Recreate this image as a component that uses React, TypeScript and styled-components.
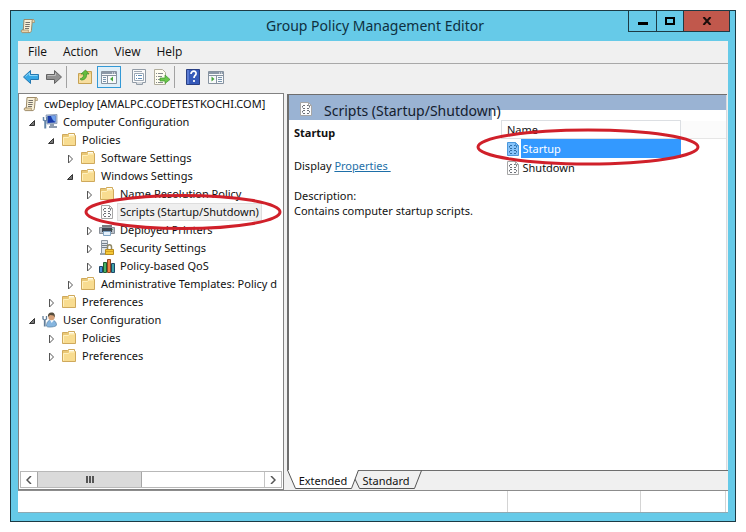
import React from "react";
import styled, { createGlobalStyle, css } from "styled-components";

const GlobalStyle = createGlobalStyle`
  * { box-sizing: border-box; }
  body {
    margin: 0;
    background: #ffffff;
    color: #111111;
    font-family: "Noto Sans", "Open Sans", sans-serif;
    font-size: 12px;
  }
  button {
    margin: 0;
    padding: 0;
    border: 0;
    background: none;
    color: inherit;
    font: inherit;
  }
  svg { display: block; flex: none; }
`;

const Page = styled.div`
  display: flex;
  min-height: 100vh;
  padding: 10px;
`;

const Window = styled.div`
  display: flex;
  flex: 1;
  flex-direction: column;
  min-width: 0;
  border: 1px solid #1c3a44;
  background: #66cae8;
`;

const TitleBar = styled.header`
  display: grid;
  grid-template-columns: 1fr auto 1fr;
  height: 30px;
  padding: 0 5px 0 9px;
`;

const TitleIcon = styled.div`
  padding-top: 7px;
`;

const Title = styled.h1`
  margin: 0;
  color: #0e3040;
  font-size: 14px;
  font-weight: 400;
  line-height: 30px;
`;

const Controls = styled.div`
  display: flex;
  justify-self: end;
  height: 21px;
  border: solid #1c3a44;
  border-width: 0 1px 1px;
`;

const ControlButton = styled.button<{ $wide?: boolean }>`
  display: flex;
  align-items: center;
  justify-content: center;
  width: ${(p) => (p.$wide ? 46 : 27)}px;
  background: ${(p) => (p.$wide ? "#c1584c" : "transparent")};
  & + & { border-left: 1px solid #1c3a44; }
`;

const Client = styled.div`
  display: flex;
  flex: 1;
  flex-direction: column;
  min-width: 0;
  margin: 0 7px 8px;
  border-bottom: 1px solid #8fa9b2;
  background: #f0f0f0;
`;

const MenuBar = styled.nav`
  display: flex;
  gap: 16px;
  height: 23px;
  padding: 0 10px;
  border-bottom: 1px solid #a8a8a8;
`;

const MenuButton = styled.button`
  font-family: "Open Sans", "Noto Sans", sans-serif;
  line-height: 22px;
`;

const Toolbar = styled.div`
  display: flex;
  align-items: center;
  height: 29px;
  padding: 0 5px 4px;
`;

const ToolGroup = styled.div<{ $divided?: boolean; $lead?: boolean }>`
  display: flex;
  align-items: center;
  height: 22px;
  gap: 7px;
  padding: 0 ${(p) => (p.$divided ? 4 : 0)}px 0 ${(p) => (p.$lead ? 10 : 0)}px;
  border-right: ${(p) => (p.$divided ? "1px solid #a2a2a2" : "0")};
`;

const ToolButton = styled.button<{ $active?: boolean }>`
  display: flex;
  align-items: center;
  justify-content: center;
  width: 16px;
  height: 22px;
  ${(p) =>
    p.$active &&
    css`
      width: 24px;
      margin: 0 3px 0 -3px;
      border: 1px solid #3399d6;
      background: #e0eff8;
    `}
`;

const Workspace = styled.div`
  display: grid;
  flex: 1;
  grid-template-columns: 266px minmax(0, 1fr);
  gap: 3px;
`;

const TreePane = styled.aside`
  display: flex;
  flex-direction: column;
  min-width: 0;
  border: 1px solid #828282;
  background: #ffffff;
`;

const TreeList = styled.ul`
  flex: 1;
  margin: 0;
  padding: 1px 0 0;
  list-style: none;
`;

const TreeRow = styled.li<{ $level: number }>`
  position: relative;
  display: flex;
  align-items: center;
  height: 18px;
  padding-left: ${(p) => (p.$level === 0 ? 4 : p.$level * 19 - 9)}px;
`;

const Expander = styled.button`
  display: flex;
  align-items: center;
  width: 13px;
  height: 18px;
  flex: none;
`;

const ExpanderSpace = styled.span`
  width: 13px;
  flex: none;
`;

const TreeLabel = styled.span<{ $selected?: boolean }>`
  min-width: 0;
  margin-left: 3px;
  padding: 0 2px;
  overflow: hidden;
  font-size: 11px;
  line-height: 16px;
  white-space: nowrap;
  ${(p) =>
    p.$selected &&
    css`
      background: #efefef;
      box-shadow: 0 0 0 1px #dedede;
    `}
`;

const TreeMark = styled.svg`
  position: absolute;
  z-index: 2;
  top: -10px;
  left: 65px;
  pointer-events: none;
`;

const ScrollBar = styled.div`
  display: grid;
  grid-template-columns: 16px 105px 1fr 16px;
  height: 17px;
  margin: 0 1px 1px;
  border: 1px solid #b8b8b8;
`;

const ScrollButton = styled.button`
  display: flex;
  align-items: center;
  justify-content: center;
`;

const ScrollThumb = styled.div`
  display: flex;
  align-items: center;
  justify-content: center;
  border: solid #a6a6a6;
  border-width: 0 1px;
  background: #dadada;
`;

const ScrollTrack = styled.div`
  border-right: 1px solid #c4c4c4;
`;

const ResultSide = styled.main`
  display: flex;
  flex-direction: column;
  min-width: 0;
`;

const ResultPane = styled.section`
  display: grid;
  flex: 1;
  grid-template-columns: 203px minmax(0, 1fr);
  margin: 1px 1px 0 0;
  border: solid #6e6e6e;
  border-width: 1px 0 0 2px;
  background: #ffffff;
`;

const DetailColumn = styled.div`
  min-width: 0;
`;

const PaneHeading = styled.div`
  position: relative;
  display: flex;
  align-items: center;
  gap: 11px;
  height: 25px;
  padding-left: 10px;
  background: #9ab3d3;
  white-space: nowrap;
`;

const PaneTitle = styled.h2`
  margin: 0;
  padding-top: 6px;
  color: #14202e;
  font-size: 14px;
  font-weight: 400;
  line-height: 17px;
`;

const HeadingIcon = styled.div`
  padding-top: 3px;
`;

const Detail = styled.div`
  padding: 5px 5px;
  white-space: nowrap;
  font-size: 11px;
  line-height: 15px;
`;

const DetailTitle = styled.h3`
  margin: 0 0 18px;
  font-size: 11px;
  font-weight: 700;
  line-height: 15px;
`;

const DetailText = styled.p`
  margin: 0 0 15px;
`;

const TextLink = styled.a`
  color: #1e6fa8;
  white-space: pre;
`;

const ListColumn = styled.div`
  min-width: 0;
  border-right: 1px solid #d9dce0;
`;

const HeadingRail = styled.div`
  height: 15px;
  background: #9ab3d3;
`;

const ListArea = styled.div`
  position: relative;
  padding: 10px 0 0 9px;
`;

const FileTable = styled.table`
  width: 100%;
  border-collapse: collapse;
  table-layout: fixed;
  font-size: 11px;
`;

const NameHead = styled.th`
  width: 179px;
  height: 18px;
  padding: 0 5px;
  border: 1px solid #dcdfe3;
  font-weight: 400;
  line-height: 17px;
  text-align: left;
`;

const RestHead = styled.th`
  padding: 0;
  border: solid #e6e6e6;
  border-width: 0 0 1px;
  background: #fbfbfb;
`;

const FileCell = styled.td`
  height: 19px;
  padding: 0 0 0 4px;
`;

const FileItem = styled.div`
  display: flex;
  align-items: center;
`;

const FileName = styled.span<{ $selected?: boolean }>`
  flex: 1;
  margin-left: 1px;
  padding-left: 2px;
  line-height: 19px;
  background: ${(p) => (p.$selected ? "#3399ff" : "transparent")};
  color: ${(p) => (p.$selected ? "#ffffff" : "inherit")};
`;

const ListMark = styled.svg`
  position: absolute;
  z-index: 2;
  top: 18px;
  left: -16px;
  pointer-events: none;
`;

const TabStrip = styled.div`
  display: flex;
  height: 20px;
  border-top: 1px solid #6e6e6e;
`;

const Tab = styled.button<{ $active?: boolean }>`
  position: relative;
  z-index: ${(p) => (p.$active ? 1 : 0)};
  width: 72px;
  height: 19px;
  margin-right: -9px;
  font-size: 11px;
  line-height: 17px;
`;

const TabShape = styled.svg`
  position: absolute;
  inset: -1px 0 0;
`;

const TabText = styled.span`
  position: relative;
`;

const StatusBar = styled.footer`
  display: grid;
  grid-template-columns: minmax(0, 1fr) 133px 85px;
  height: 22px;
  padding-right: 2px;
  border-top: 1px solid #8c8c8c;
  background: #ffffff;
`;

const StatusCell = styled.div`
  border-right: 1px solid #d4d4d4;
`;

const ScrollIcon = () => (
  <svg width="16" height="16" viewBox="0 0 16 16">
    <path d="M4 1.5h9.5c-1 .3-1.3 1.2-1.3 2.5l-.8 8.5c-.2 1.5-.9 2.1-2 2.1H2.5c-1.3 0-1.8-2.6-.4-2.6h1.2z" fill="#f8f0d8" stroke="#9c8a68" />
    <path d="M12.2 4.5h2.3c.3-1.6-.1-2.9-1.4-2.9-.9 0-1 1-.9 2.9zM2 12h6.500c-.5 1 0 2.500 1 2.500H2.500c-1.100 0-1.500-2-.5-2.500z" fill="#e8d5ad" stroke="#9c8a68" strokeWidth=".7" />
    <path d="M5.500 4.500h4.500M5.300 6.500h4.500M5.100 8.500h4.500M5 10.500h4" stroke="#75716b" />
  </svg>
);

const FolderIcon = () => (
  <svg width="16" height="16" viewBox="0 0 16 16">
    <path d="M1.500 13.500v-11h5l1-1h6v2h1v10z" fill="#eac875" stroke="#cfa95c" />
    <path d="M8 2h5v2H8z" fill="#fffdf0" />
    <path d="M2 13V5h5l1.500-1.500H14V13z" fill="#f8dc90" />
    <path d="M2.500 12.500v-7h5L9 4h4.500" fill="none" stroke="#fff0bd" />
  </svg>
);

const ComputerIcon = () => (
  <svg width="16" height="16" viewBox="0 0 16 16">
    <path d="M4 1l11-.5v9L5 10z" fill="#b9c9dc" stroke="#7387a4" strokeWidth=".7" />
    <path d="M5.500 2l8-.4v7l-8 .3z" fill="#193ba9" />
    <path d="M9 2l4.500-.3v6C11 7 10 5 9 2z" fill="#6fa1ed" />
    <path d="M8 10h4v2h3v2H7v-2h1z" fill="#8d9bad" />
    <path d="M1.500 3v3L3 7v7.500M4.800 3v3L3.500 7v7.500" fill="none" stroke="#6586a8" strokeWidth="1.500" />
  </svg>
);

const UserIcon = () => (
  <svg width="16" height="16" viewBox="0 0 16 16">
    <path d="M4.500 14c0-4 2-6 5-6s5 2 5 5c0 2-10 3-10 1z" fill="#85b5df" stroke="#587f9f" strokeWidth=".7" />
    <path d="M8 8l1.700 3L12 8z" fill="#f4f9ff" />
    <circle cx="9.500" cy="5" r="3.200" fill="#d6a078" />
    <path d="M6 5c-.5-3 1-4.500 3.500-4.500 2.700 0 4 2 3 5L11.500 3.500 8 3z" fill="#574d3c" />
    <path d="M1 4v3l1.500 1v6.500M4.500 4v3L3 8v6.500" fill="none" stroke="#617d98" strokeWidth="1.300" />
  </svg>
);

const ScriptIcon = ({ selected = false }: { selected?: boolean }) => (
  <svg width="14" height="16" viewBox="0 0 14 16">
    <path d="M1.500 1.500h8l3 3v10h-11z" fill={selected ? "#86c3fa" : "#fcfcfc"} stroke={selected ? "#4b98dc" : "#a6a6a6"} />
    <path d="M9.500 1.500v3h3" fill="none" stroke={selected ? "#4b98dc" : "#a6a6a6"} />
    <path
      d="M4 4.500h2M8 4.500h1.500M3.500 5v1.500M10.500 5v1.500M4 7.500h2M8 7.500h2M4 9.500h2M8 9.500h2M3.500 10v1.500M10.500 10v1.500M4 12.500h2M8 12.500h2"
      fill="none"
      stroke={selected ? "#2f6ea5" : "#6d7178"}
    />
  </svg>
);

const PrinterIcon = () => (
  <svg width="16" height="16" viewBox="0 0 16 16">
    <path d="M3 3h10v4H3z" fill="#777b80" />
    <path d="M.500 5.500h15v6H.5z" fill="#b9c0c9" stroke="#8a9199" />
    <path d="M3 6h10v4H3z" fill="#3d4650" />
    <path d="M4.500 9.500h7v4h-7z" fill="#e4f0fb" stroke="#7fa3c2" />
    <path d="M13 7.500h1" stroke="#48b34f" />
  </svg>
);

const SecurityIcon = () => (
  <svg width="16" height="16" viewBox="0 0 16 16">
    <path d="M2.500.500h6v13h-6z" fill="#dfe4e9" stroke="#8b959f" />
    <path d="M3 3.500h5M3 5.500h5M3 7.500h5" stroke="#77828d" />
    <path d="M1 13h8v2H1z" fill="#98a2aa" />
    <path d="M8.500 9V7c0-3 4-3 4 0v2" fill="none" stroke="#908967" strokeWidth="1.500" />
    <path d="M6.500 9.500h8v5h-8z" fill="#f4c737" stroke="#b98c1e" />
    <path d="M7 11.500h7" stroke="#d8a11e" />
  </svg>
);

const ChartIcon = () => (
  <svg width="16" height="16" viewBox="0 0 16 16">
    <path d="M.5 8.500h3v6h-3z" fill="#438fd5" stroke="#1e4566" />
    <path d="M4.500 4.500h3v10h-3z" fill="#4ab263" stroke="#205c31" />
    <path d="M8.500 1.500h3v13h-3z" fill="#ed7f43" stroke="#944420" />
    <path d="M12.500 5.500h3v9h-3z" fill="#3fa5a8" stroke="#1e4566" />
  </svg>
);

const ArrowIcon = ({ forward = false }: { forward?: boolean }) => (
  <svg width="16" height="16" viewBox="0 0 16 16">
    <path
      d={forward ? "M.5 5.500h8v-4l7 6.500-7 6.500v-4h-8z" : "M15.500 5.500h-8v-4L.500 8l7 6.500v-4h8z"}
      fill={forward ? "#929292" : "#36a7e5"}
      stroke={forward ? "#626262" : "#2577b0"}
    />
    <path d={forward ? "M1.500 6.500h8v-2.500" : "M14.500 6.500h-8V4L2.500 7.500"} fill="none" stroke={forward ? "#bdbdbd" : "#8bd5f7"} />
  </svg>
);

const UpFolderIcon = () => (
  <svg width="16" height="16" viewBox="0 0 16 16">
    <path d="M1.500 14.500v-10h5l2-2h6v12z" fill="#efcf81" stroke="#c6a254" />
    <path d="M2 14V7h5l2-2h5v9z" fill="#f7dea0" />
    <path d="M3 10c3-1 4-3 3.500-5H4l4.500-4L12 5H9.500c.5 4-2 6-5 6z" fill="#66bd3d" stroke="#3c8b29" strokeWidth=".7" />
  </svg>
);

const PaneIcon = ({ mirrored = false }: { mirrored?: boolean }) => (
  <svg width="16" height="14" viewBox="0 0 16 14">
    <path d="M.5 1.500h15v12H.5z" fill="#f9fafb" stroke="#8793a0" />
    <path d="M1 2h14v2H1z" fill="#8b98a7" />
    <path d="M11 3h1M13 3h1" stroke="#ffffff" />
    <path d={mirrored ? "M8.500 5v8M1 5.500h14" : "M6.500 5v8M1 5.500h14"} stroke="#8793a0" />
    <path d={mirrored ? "M10 7.500h4M10 9.500h4M10 11.500h4" : "M2 7.500h3M2 9.500h3M2 11.500h3"} stroke="#7894ad" />
    <path d={mirrored ? "M3.500 6.500v5l3-2.500z" : "M12 6.500v5L9 9z"} fill="#47a63c" />
  </svg>
);

const PropertiesIcon = () => (
  <svg width="16" height="16" viewBox="0 0 16 16">
    <path d="M1.500.500h13v13h-3v2h-6v-2h-4z" fill="#fafafa" stroke="#919ba6" />
    <path d="M3.500 4.500h9v7h-9z" fill="#ffffff" stroke="#9ba7b4" />
    <path d="M3 2.500h8" stroke="#a0aab5" />
    <path d="M5 6.500h1M7 6.500h4M5 9.500h1M7 9.500h4" stroke="#628eb7" />
    <path d="M6 14h5" stroke="#b1b9c1" />
  </svg>
);

const ExportIcon = () => (
  <svg width="16" height="16" viewBox="0 0 16 16">
    <path d="M.5.500h8l3 3v12H.5z" fill="#fffdf0" stroke="#b0ad9c" />
    <path d="M2 4.500h1M4 4.500h5M2 7.500h1M4 7.500h4M2 10.500h1M4 10.500h3M2 13.500h1M4 13.500h5" stroke="#85898c" />
    <path d="M6 9h5V6l5 4.500-5 4V12H6z" fill="#6bc64b" stroke="#3f9730" strokeWidth=".7" />
  </svg>
);

const HelpIcon = () => (
  <svg width="14" height="16" viewBox="0 0 14 16">
    <path d="M.5.500h13v15H.5z" fill="#3559b9" stroke="#293f83" />
    <path d="M1 1h2v14H1z" fill="#5b7bd2" />
    <path d="M5 5c0-4 6-3.500 5 0-.3 1.500-2 1.600-2 4M8 11v2" fill="none" stroke="#ffffff" strokeWidth="1.700" />
  </svg>
);

type NodeState = "open" | "closed" | "leaf";

type TreeNode = {
  label: string;
  level: number;
  state: NodeState;
  icon: React.ReactNode;
  selected?: boolean;
};

const nodes: TreeNode[] = [
  { label: "cwDeploy [AMALPC.CODETESTKOCHI.COM]", level: 0, state: "leaf", icon: <ScrollIcon /> },
  { label: "Computer Configuration", level: 1, state: "open", icon: <ComputerIcon /> },
  { label: "Policies", level: 2, state: "open", icon: <FolderIcon /> },
  { label: "Software Settings", level: 3, state: "closed", icon: <FolderIcon /> },
  { label: "Windows Settings", level: 3, state: "open", icon: <FolderIcon /> },
  { label: "Name Resolution Policy", level: 4, state: "closed", icon: <FolderIcon /> },
  { label: "Scripts (Startup/Shutdown)", level: 4, state: "leaf", icon: <ScriptIcon />, selected: true },
  { label: "Deployed Printers", level: 4, state: "closed", icon: <PrinterIcon /> },
  { label: "Security Settings", level: 4, state: "closed", icon: <SecurityIcon /> },
  { label: "Policy-based QoS", level: 4, state: "closed", icon: <ChartIcon /> },
  { label: "Administrative Templates: Policy d", level: 3, state: "closed", icon: <FolderIcon /> },
  { label: "Preferences", level: 2, state: "closed", icon: <FolderIcon /> },
  { label: "User Configuration", level: 1, state: "open", icon: <UserIcon /> },
  { label: "Policies", level: 2, state: "closed", icon: <FolderIcon /> },
  { label: "Preferences", level: 2, state: "closed", icon: <FolderIcon /> },
];

const IconSlot = styled.span`
  display: flex;
  justify-content: center;
  width: 16px;
  flex: none;
`;

const files = [
  { name: "Startup", selected: true },
  { name: "Shutdown", selected: false },
];

function Tree() {
  return (
    <TreeList>
      {nodes.map((node, index) => (
        <TreeRow key={index} $level={node.level}>
          {node.state !== "leaf" && (
            <Expander aria-label={`Toggle ${node.label}`} aria-expanded={node.state === "open"}>
              <svg width="7" height="12" viewBox="0 0 7 12">
                {node.state === "open" ? (
                  <path d="M5.500 4.500v5h-5z" fill="#777777" stroke="#333333" />
                ) : (
                  <path d="M1.500 3v8l4-4z" fill="#ffffff" stroke="#555555" />
                )}
              </svg>
            </Expander>
          )}
          {node.state === "leaf" && node.level > 0 && <ExpanderSpace />}
          <IconSlot>{node.icon}</IconSlot>
          <TreeLabel $selected={node.selected}>{node.label}</TreeLabel>
          {node.selected && (
            <TreeMark width="200" height="38" viewBox="0 0 200 38">
              <ellipse cx="99" cy="19" rx="97" ry="16.5" fill="none" stroke="#d0202a" strokeWidth="3" />
            </TreeMark>
          )}
        </TreeRow>
      ))}
    </TreeList>
  );
}

export default function App() {
  return (
    <Page>
      <GlobalStyle />
      <Window>
        <TitleBar>
          <TitleIcon><ScrollIcon /></TitleIcon>
          <Title>Group Policy Management Editor</Title>
          <Controls>
            <ControlButton aria-label="Minimize">
              <svg width="10" height="8" viewBox="0 0 10 8"><path d="M0 5h10v3H0z" fill="#000000" /></svg>
            </ControlButton>
            <ControlButton aria-label="Maximize">
              <svg width="10" height="8" viewBox="0 0 10 8"><path d="M1 1h8v6H1z" fill="none" stroke="#000000" strokeWidth="2" /></svg>
            </ControlButton>
            <ControlButton $wide aria-label="Close">
              <svg width="10" height="8" viewBox="0 0 10 8"><path d="M1.500 0l7 8M8.500 0l-7 8" stroke="#1a0d0b" strokeWidth="2" /></svg>
            </ControlButton>
          </Controls>
        </TitleBar>
        <Client>
          <MenuBar>
            {["File", "Action", "View", "Help"].map((item) => (
              <MenuButton key={item}>{item}</MenuButton>
            ))}
          </MenuBar>
          <Toolbar>
            <ToolGroup $divided>
              <ToolButton aria-label="Back"><ArrowIcon /></ToolButton>
              <ToolButton aria-label="Forward"><ArrowIcon forward /></ToolButton>
            </ToolGroup>
            <ToolGroup $divided $lead>
              <ToolButton aria-label="Up one level"><UpFolderIcon /></ToolButton>
              <ToolButton $active aria-label="Show console tree"><PaneIcon /></ToolButton>
              <ToolButton aria-label="Properties"><PropertiesIcon /></ToolButton>
              <ToolButton aria-label="Export list"><ExportIcon /></ToolButton>
            </ToolGroup>
            <ToolGroup $lead>
              <ToolButton aria-label="Help"><HelpIcon /></ToolButton>
              <ToolButton aria-label="Show action pane"><PaneIcon mirrored /></ToolButton>
            </ToolGroup>
          </Toolbar>
          <Workspace>
            <TreePane>
              <Tree />
              <ScrollBar>
                <ScrollButton aria-label="Scroll left">
                  <svg width="6" height="8" viewBox="0 0 6 8"><path d="M5 0L1 4l4 4" fill="none" stroke="#555555" strokeWidth="1.500" /></svg>
                </ScrollButton>
                <ScrollThumb>
                  <svg width="8" height="7" viewBox="0 0 8 7"><path d="M1 0v7M4 0v7M7 0v7" stroke="#555555" strokeWidth="2" /></svg>
                </ScrollThumb>
                <ScrollTrack />
                <ScrollButton aria-label="Scroll right">
                  <svg width="6" height="8" viewBox="0 0 6 8"><path d="M1 0l4 4-4 4" fill="none" stroke="#555555" strokeWidth="1.500" /></svg>
                </ScrollButton>
              </ScrollBar>
            </TreePane>
            <ResultSide>
              <ResultPane>
                <DetailColumn>
                  <PaneHeading>
                    <HeadingIcon><ScriptIcon /></HeadingIcon>
                    <PaneTitle>Scripts (Startup/Shutdown)</PaneTitle>
                  </PaneHeading>
                  <Detail>
                    <DetailTitle>Startup</DetailTitle>
                    <DetailText>Display <TextLink href="#properties">{"Properties "}</TextLink></DetailText>
                    <DetailText>Description:<br />Contains computer startup scripts.</DetailText>
                  </Detail>
                </DetailColumn>
                <ListColumn>
                  <HeadingRail />
                  <ListArea>
                    <FileTable>
                      <thead>
                        <tr><NameHead>Name</NameHead><RestHead /></tr>
                      </thead>
                      <tbody>
                        {files.map((file) => (
                          <tr key={file.name}>
                            <FileCell>
                              <FileItem>
                                <ScriptIcon selected={file.selected} />
                                <FileName $selected={file.selected}>{file.name}</FileName>
                              </FileItem>
                            </FileCell>
                            <td />
                          </tr>
                        ))}
                      </tbody>
                    </FileTable>
                    <ListMark width="226" height="40" viewBox="0 0 226 40">
                      <ellipse cx="112" cy="19" rx="110" ry="17" fill="none" stroke="#d0202a" strokeWidth="3" />
                    </ListMark>
                  </ListArea>
                </ListColumn>
              </ResultPane>
              <TabStrip>
                <Tab $active>
                  <TabShape width="72" height="20" viewBox="0 0 72 20">
                    <path d="M.5 0l8 19h56l7-19z" fill="#ffffff" />
                    <path d="M.5 0l8 18.500h56l7-18.500" fill="none" stroke="#555555" />
                  </TabShape>
                  <TabText>Extended</TabText>
                </Tab>
                <Tab>
                  <TabShape width="72" height="20" viewBox="0 0 72 20">
                    <path d="M4.500 8l5 10.500h55l7-18" fill="none" stroke="#555555" />
                  </TabShape>
                  <TabText>Standard</TabText>
                </Tab>
              </TabStrip>
            </ResultSide>
          </Workspace>
          <StatusBar>
            <StatusCell />
            <StatusCell />
            <StatusCell />
          </StatusBar>
        </Client>
      </Window>
    </Page>
  );
}
